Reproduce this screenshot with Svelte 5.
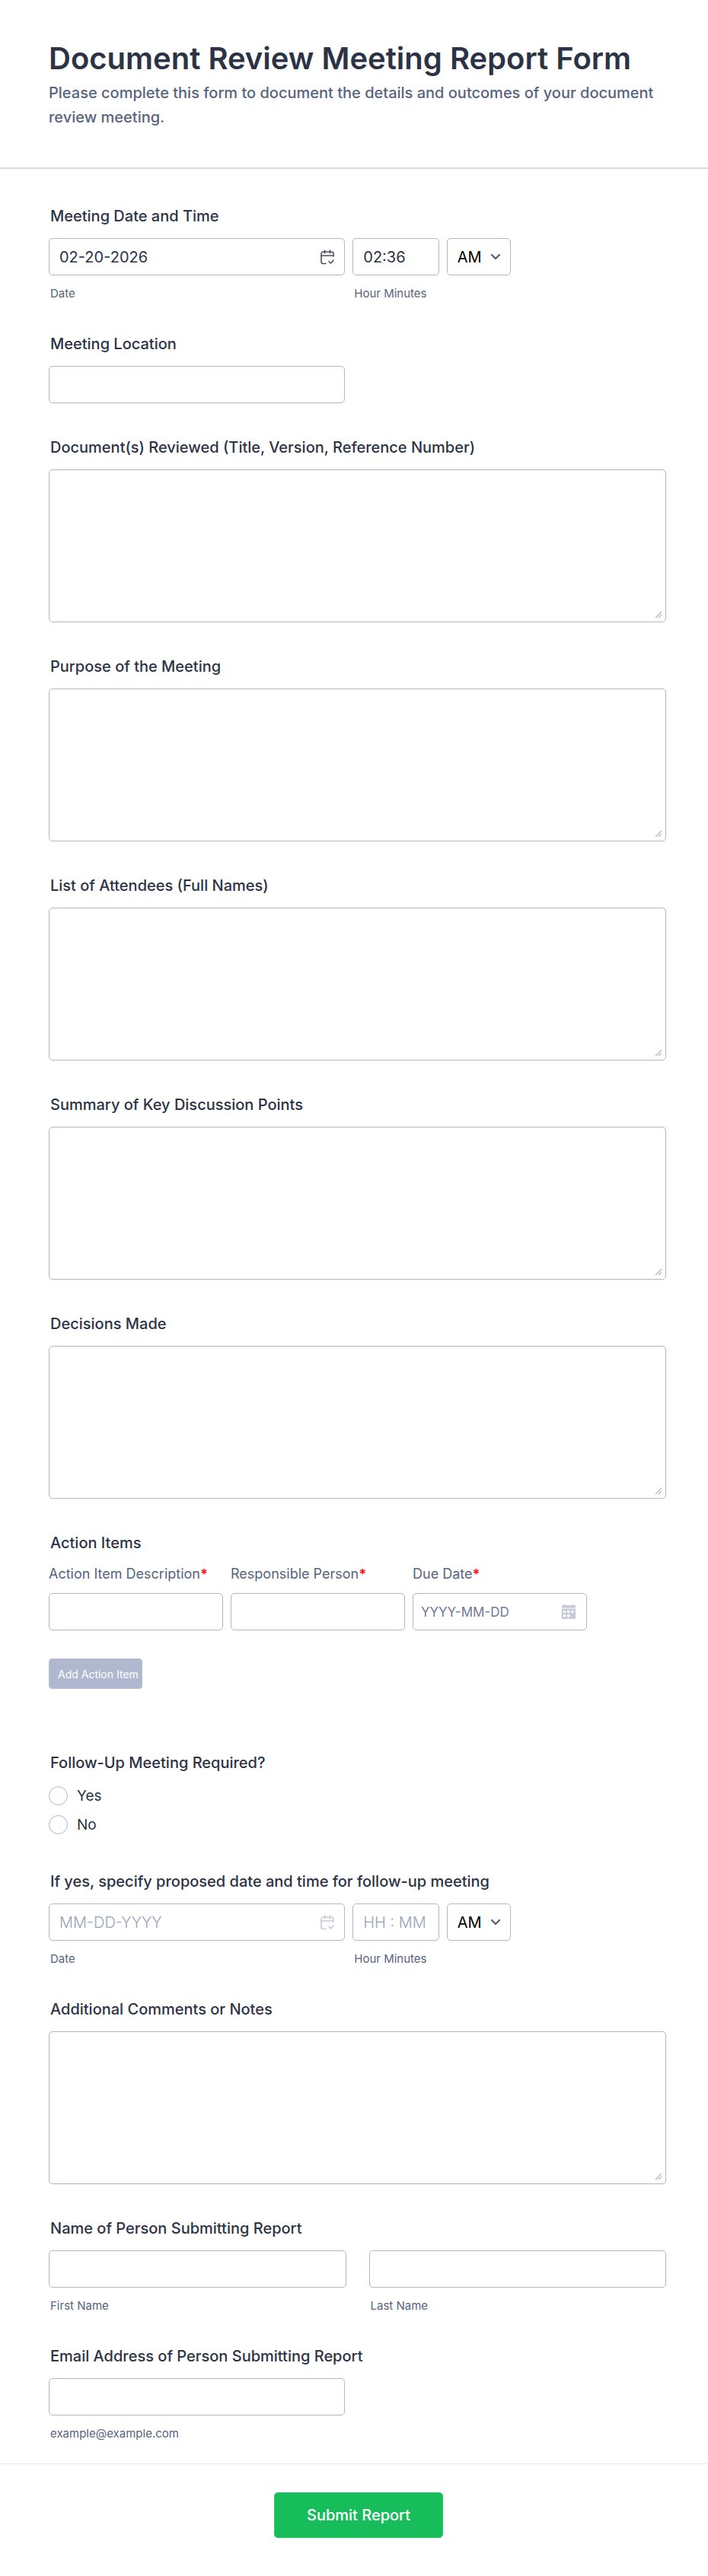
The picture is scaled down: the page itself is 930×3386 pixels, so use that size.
<script lang="ts">
    type Field = { id: string; label: string };

    const longFields: Field[] = [
        { id: 'documents', label: 'Document(s) Reviewed (Title, Version, Reference Number)' },
        { id: 'purpose', label: 'Purpose of the Meeting' },
        { id: 'attendees', label: 'List of Attendees (Full Names)' },
        { id: 'summary', label: 'Summary of Key Discussion Points' },
        { id: 'decisions', label: 'Decisions Made' }
    ];

    let followUp = $state('');
    let actionRows = $state([{ description: '', person: '', due: '' }]);

    const addActionItem = () => {
        actionRows.push({ description: '', person: '', due: '' });
    };
</script>

<!-- Date + time + AM/PM, used for the meeting and for the follow-up -->
{#snippet dateTime(id: string, label: string, date: string, time: string)}
    <fieldset class="field">
        <legend class="field-label">{label}</legend>
        <div class="date-row">
            <div class="date-cell">
                <div class="with-icon">
                    <input id="{id}-date" type="text" class="control" placeholder="MM-DD-YYYY" value={date} />
                    <button type="button" class="icon-button" class:faded={!date} aria-label="Choose date">
                        <svg width="18" height="20" viewBox="0 0 18 20" fill="none" stroke="currentColor" stroke-width="1.6" stroke-linecap="round" stroke-linejoin="round">
                            <path d="M7 18.5H3.5A2.5 2.5 0 0 1 1 16V5.5A2.5 2.5 0 0 1 3.5 3h11A2.5 2.5 0 0 1 17 5.5V9" />
                            <path d="M1 8h16M5.5 1v4M12.5 1v4M11 15.5l2.5 2.5L17 14" />
                        </svg>
                    </button>
                </div>
                <label class="sub-label" for="{id}-date">Date</label>
            </div>
            <div class="time-cell">
                <input id="{id}-time" type="text" class="control" placeholder="HH : MM" value={time} />
                <label class="sub-label" for="{id}-time">Hour Minutes</label>
            </div>
            <div class="select-cell">
                <select class="control" aria-label="AM or PM">
                    <option>AM</option>
                    <option>PM</option>
                </select>
                <svg class="chevron" width="14" height="10" viewBox="0 0 14 10" fill="none" stroke="currentColor" stroke-width="2.4" stroke-linecap="round" stroke-linejoin="round">
                    <path d="M2 2l5 5 5-5" />
                </svg>
            </div>
        </div>
    </fieldset>
{/snippet}

{#snippet longText(id: string, label: string)}
    <div class="field">
        <label class="field-label" for={id}>{label}</label>
        <textarea {id} class="control"></textarea>
    </div>
{/snippet}

<form class="form-page">
    <header class="form-header">
        <h1>Document Review Meeting Report Form</h1>
        <p>Please complete this form to document the details and outcomes of your document review meeting.</p>
    </header>

    <div class="form-body">
        {@render dateTime('meeting', 'Meeting Date and Time', '02-20-2026', '02:36')}

        <div class="field">
            <label class="field-label" for="location">Meeting Location</label>
            <input id="location" type="text" class="control half" />
        </div>

        {#each longFields as field (field.id)}
            {@render longText(field.id, field.label)}
        {/each}

        <fieldset class="field action-field">
            <legend class="field-label">Action Items</legend>
            {#each actionRows as row, i}
                <div class="action-row">
                    <div>
                        <label for="description-{i}">Action Item Description<b>*</b></label>
                        <input id="description-{i}" type="text" class="control small" bind:value={row.description} />
                    </div>
                    <div>
                        <label for="person-{i}">Responsible Person<b>*</b></label>
                        <input id="person-{i}" type="text" class="control small" bind:value={row.person} />
                    </div>
                    <div>
                        <label for="due-{i}">Due Date<b>*</b></label>
                        <div class="with-icon">
                            <input id="due-{i}" type="text" class="control small" placeholder="YYYY-MM-DD" bind:value={row.due} />
                            <button type="button" class="icon-button grid-icon" aria-label="Choose due date">
                                <svg width="20" height="19" viewBox="0 0 20 19" fill="currentColor">
                                    <path d="M1 1h2.5V0h2v1h9V0h2v1H19v3.5H1z" />
                                    <path fill-rule="evenodd" d="M1 5.5h18V19H1zM3 8v3h3V8zM8 8v3h3.5V8zM13.5 8v3h3V8zM3 13v3.5h3V13zM8 13v3.5h3.5V13z" />
                                </svg>
                            </button>
                        </div>
                    </div>
                </div>
            {/each}
            <button type="button" class="add-button" onclick={addActionItem}>Add Action Item</button>
        </fieldset>

        <fieldset class="field">
            <legend class="field-label">Follow-Up Meeting Required?</legend>
            <div class="radio-list">
                {#each ['Yes', 'No'] as option}
                    <label>
                        <input type="radio" name="follow-up" value={option} bind:group={followUp} />
                        {option}
                    </label>
                {/each}
            </div>
        </fieldset>

        {@render dateTime('proposed', 'If yes, specify proposed date and time for follow-up meeting', '', '')}
        {@render longText('comments', 'Additional Comments or Notes')}

        <fieldset class="field">
            <legend class="field-label">Name of Person Submitting Report</legend>
            <div class="name-row">
                <div>
                    <input id="first-name" type="text" class="control" />
                    <label class="sub-label" for="first-name">First Name</label>
                </div>
                <div>
                    <input id="last-name" type="text" class="control" />
                    <label class="sub-label" for="last-name">Last Name</label>
                </div>
            </div>
        </fieldset>

        <div class="field">
            <label class="field-label" for="email">Email Address of Person Submitting Report</label>
            <input id="email" type="email" class="control half" aria-describedby="email-hint" />
            <span id="email-hint" class="sub-label">example@example.com</span>
        </div>
    </div>

    <footer class="form-footer">
        <button type="submit" class="submit-button">Submit Report</button>
    </footer>
</form>

<style>
    :global(body) {
        background: #ffffff;
    }

    .form-page {
        font-family: Inter, 'Liberation Sans', sans-serif;
        color: #2c3345;
        font-size: 20px;
        line-height: 24px;
    }

    .form-page * {
        box-sizing: border-box;
    }

    .form-header {
        padding: 52px 55px 50px 64px;
        border-bottom: 2px solid #d7d8e1;
    }

    h1 {
        margin: 0;
        font-size: 40px;
        line-height: 50px;
        font-weight: 600;
    }

    .form-header p {
        margin: 4px 0 0;
        font-weight: 500;
        line-height: 32px;
        color: #57647e;
    }

    .form-body {
        display: flex;
        flex-direction: column;
        gap: 46px;
        padding: 50px 55px 31px 64px;
    }

    .field {
        min-width: 0;
        margin: 0;
        padding: 0;
        border: 0;
    }

    .field-label {
        display: block;
        margin-bottom: 17px;
        padding: 0 0 0 2px;
        font-weight: 500;
    }

    .control {
        display: block;
        width: 100%;
        height: 49px;
        margin: 0;
        padding: 0 13px;
        border: 1px solid #b0b6c6;
        border-radius: 5px;
        background: #ffffff;
        color: #2c3345;
        font-family: inherit;
        font-size: 20px;
        appearance: none;
    }

    .control::placeholder {
        color: #95a3b8;
        font-weight: 300;
        opacity: 1;
    }

    .control:focus {
        outline: 2px solid #b5c7f5;
    }

    textarea.control {
        height: 201px;
        padding: 12px 13px;
        resize: vertical;
    }

    /* two short strokes in the corner of the textarea */
    textarea.control::-webkit-resizer {
        background: url("data:image/svg+xml,%3Csvg xmlns='http://www.w3.org/2000/svg' width='15' height='15'%3E%3Cpath d='M2 10L10 2M6 10l4-4' stroke='%23b5bac8' stroke-width='1.4' fill='none'/%3E%3C/svg%3E") no-repeat;
    }

    .control.half {
        width: 48%;
    }

    .sub-label {
        display: block;
        margin-top: 15px;
        padding-left: 2px;
        font-size: 15px;
        line-height: 17px;
        color: #57647e;
    }

    .date-row {
        display: flex;
        gap: 10px;
    }

    .date-cell {
        width: 48%;
    }

    .time-cell {
        width: 14%;
    }

    .select-cell {
        position: relative;
        width: 84px;
    }

    select.control {
        color: #000000;
    }

    .chevron {
        position: absolute;
        top: 20px;
        right: 13px;
        color: #57647e;
        pointer-events: none;
    }

    .with-icon {
        position: relative;
    }

    .icon-button {
        position: absolute;
        top: 15px;
        right: 14px;
        display: flex;
        padding: 0;
        border: 0;
        background: none;
        color: #4b5063;
        cursor: pointer;
    }

    .icon-button.faded,
    .icon-button.grid-icon {
        color: #c6cad6;
    }

    .action-field {
        padding-bottom: 39px;
    }

    .action-row {
        display: grid;
        grid-template-columns: repeat(3, 229px);
        gap: 10px;
        margin-bottom: 37px;
    }

    .action-row label {
        display: block;
        margin-bottom: 13px;
        font-size: 18px;
        line-height: 24px;
        white-space: nowrap;
        color: #57647e;
    }

    .action-row b {
        color: #ff1414;
    }

    .control.small {
        padding: 0 10px;
        font-size: 17px;
    }

    .control.small::placeholder {
        color: #6f7a94;
        font-weight: 400;
    }

    .add-button {
        display: block;
        height: 40px;
        padding: 0 4px 0 11px;
        border: 1px solid #b8c0d3;
        border-radius: 4px;
        background: #afb8ce;
        color: #ffffff;
        font-family: inherit;
        font-size: 14px;
        cursor: pointer;
    }

    .radio-list {
        display: flex;
        flex-direction: column;
        gap: 13px;
        padding: 2px 0 4px;
    }

    .radio-list label {
        display: flex;
        align-items: center;
        gap: 12px;
        font-size: 19px;
        line-height: 25px;
    }

    .radio-list input {
        width: 25px;
        height: 25px;
        margin: 0;
        border: 1px solid #b0b6c6;
        border-radius: 50%;
        appearance: none;
    }

    .radio-list input:checked {
        border: 8px solid #2e69ff;
    }

    .name-row {
        display: grid;
        grid-template-columns: 1fr 1fr;
        gap: 30px;
    }

    .form-footer {
        display: flex;
        justify-content: center;
        padding: 37px 52px 49px 64px;
        border-top: 1px solid #e3e7f2;
    }

    .submit-button {
        height: 60px;
        padding: 0 42px;
        border: 1px solid #2fc46b;
        border-radius: 5px;
        background: #18bd5b;
        color: #ffffff;
        font-family: inherit;
        font-size: 20px;
        font-weight: 500;
        cursor: pointer;
    }
</style>
